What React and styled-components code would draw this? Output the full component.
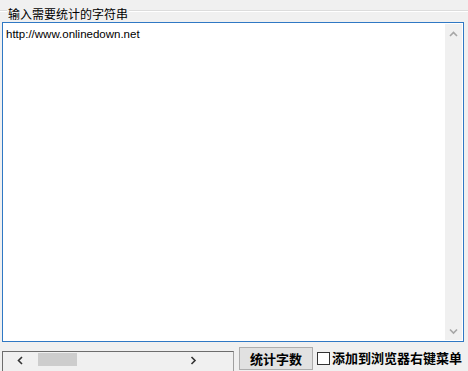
import React from 'react';
import styled, { createGlobalStyle } from 'styled-components';

const GlobalStyle = createGlobalStyle`
  html, body {
    margin: 0;
    padding: 0;
    background: #f0f0f0;
  }
  body {
    font-family: 'Liberation Sans', 'Noto Sans CJK SC', sans-serif;
  }
`;

const Window = styled.div`
  width: 468px;
  height: 371px;
  overflow: hidden;
  background: #f0f0f0;
  display: flex;
  flex-direction: column;
`;

const GroupHeader = styled.div`
  height: 22px;
  display: flex;
  align-items: flex-start;
`;

const GroupLine = styled.div`
  flex: ${p => (p.$grow ? 1 : 'none')};
  width: ${p => (p.$grow ? 'auto' : '7px')};
  margin-top: 10px;
  border-top: 1px solid #dcdcdc;
  border-bottom: 1px solid #ffffff;
`;

const GroupLabel = styled.span`
  margin-top: 6px;
  padding: 0 1px;
  font-family: 'Noto Sans CJK SC', sans-serif;
  font-size: 12px;
  line-height: 16px;
  color: #000;
`;

const TextBox = styled.div`
  margin-left: 2px;
  width: 462px;
  height: 322px;
  box-sizing: border-box;
  border: 1px solid #2f78c4;
  background: #fff;
  padding: 1px;
  display: flex;
`;

const TextContent = styled.div`
  flex: 1;
  padding: 3px 2px;
  font-family: 'Liberation Sans', sans-serif;
  font-size: 11.5px;
  line-height: 14px;
  color: #000;
`;

const VScroll = styled.div`
  width: 17px;
  background: #f0f0f0;
  display: flex;
  flex-direction: column;
  justify-content: space-between;
`;

const ArrowCell = styled.div`
  height: 17px;
  display: flex;
  align-items: center;
  justify-content: center;
  padding-top: ${p => (p.$down ? 0 : 2)}px;
`;

const BottomRow = styled.div`
  display: flex;
  align-items: flex-start;
  margin-top: 5px;
`;

const HScroll = styled.div`
  margin-left: 2px;
  margin-top: 4px;
  width: 232px;
  height: 20px;
  box-sizing: border-box;
  border-top: 1px solid #6d6d6d;
  border-left: 1px solid #6d6d6d;
  border-right: 1px solid #a0a0a0;
  background: #f0f0f0;
  display: flex;
  align-items: stretch;
`;

const HArrow = styled.div`
  width: ${p => p.$w}px;
  display: flex;
  align-items: center;
  justify-content: center;
  padding-bottom: 3px;
`;

const Thumb = styled.div`
  width: 39px;
  height: 13px;
  margin-top: 1px;
  background: #cdcdcd;
`;

const Track = styled.div`
  flex: 1;
`;

const Button = styled.button`
  margin-left: 5px;
  width: 74px;
  height: 23px;
  box-sizing: border-box;
  border: 1px solid #adadad;
  background: #e1e1e1;
  font-family: 'Noto Sans CJK SC', sans-serif;
  font-weight: bold;
  font-size: 13px;
  line-height: 19px;
  padding: 0;
  color: #000;
`;

const CheckLabel = styled.label`
  margin-left: 4px;
  margin-top: 2px;
  display: flex;
  align-items: center;
  font-family: 'Noto Sans CJK SC', sans-serif;
  font-weight: bold;
  font-size: 13px;
  line-height: 17px;
  color: #000;
`;

const Box = styled.span`
  width: 13px;
  height: 13px;
  margin-top: 1px;
  box-sizing: border-box;
  border: 1px solid #333;
  background: #fff;
  margin-right: 2px;
`;

function Chevron({ dir, color = '#a6a6a6' }) {
  const paths = {
    up: 'M1 5 L4.5 1.5 L8 5',
    down: 'M1 1.5 L4.5 5 L8 1.5',
    left: 'M5 1 L1.5 4.5 L5 8',
    right: 'M1.5 1 L5 4.5 L1.5 8'
  };
  const vertical = dir === 'up' || dir === 'down';
  return (
    <svg
      width={vertical ? 9 : 7}
      height={vertical ? 7 : 9}
      viewBox={vertical ? '0 0 9 7' : '0 0 7 9'}
    >
      <path d={paths[dir]} fill="none" stroke={color} strokeWidth="1.6" />
    </svg>
  );
}

export default function App() {
  return (
    <>
      <GlobalStyle />
      <Window>
        <GroupHeader>
          <GroupLine />
          <GroupLabel>输入需要统计的字符串</GroupLabel>
          <GroupLine $grow />
        </GroupHeader>
        <TextBox>
          <TextContent>http://www.onlinedown.net</TextContent>
          <VScroll>
            <ArrowCell>
              <Chevron dir="up" />
            </ArrowCell>
            <ArrowCell $down>
              <Chevron dir="down" />
            </ArrowCell>
          </VScroll>
        </TextBox>
        <BottomRow>
          <HScroll>
            <HArrow $w={35}>
              <Chevron dir="left" color="#333" />
            </HArrow>
            <Thumb />
            <Track />
            <HArrow $w={80}>
              <Chevron dir="right" color="#333" />
            </HArrow>
          </HScroll>
          <Button>统计字数</Button>
          <CheckLabel>
            <Box />
            添加到浏览器右键菜单
          </CheckLabel>
        </BottomRow>
      </Window>
    </>
  );
}
